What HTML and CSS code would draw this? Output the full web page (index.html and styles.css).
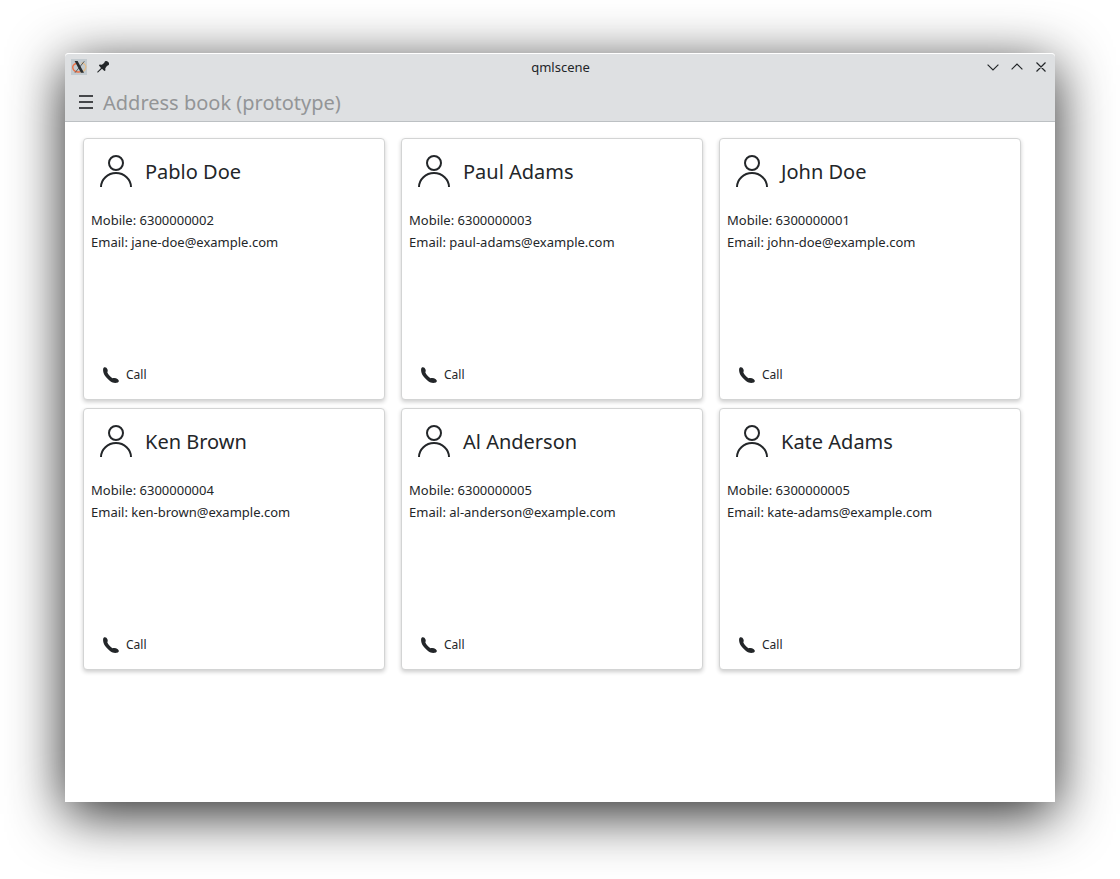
FILE: index.html
```html
<!DOCTYPE html>
<html lang="en">
<head>
<meta charset="utf-8">
<title>qmlscene</title>
<link rel="stylesheet" href="styles.css">
</head>
<body>
<svg class="defs" width="0" height="0">
  <symbol id="user" viewBox="0 0 32 34">
    <g fill="none" stroke="#232629" stroke-width="2"><circle cx="16" cy="9" r="7"/><path d="M1 33C1 25.5 7.7 19 16 19S31 25.5 31 33"/></g>
  </symbol>
  <symbol id="phone" viewBox="0 0 16 16">
    <path fill="#232629" d="M1.2 .3C2.7-.2 3.8 .7 4.4 2.2C4.9 3.5 4.8 4.4 4.3 5.2C5.2 7.4 7.2 9.8 9.5 11.3C10.9 10.6 13.2 10.9 14.8 12.2C16.2 13.4 16.2 14.6 14.9 15.4C12.6 16.3 9.6 16 7.3 14.2C3.6 11.5 .3 7.6 .1 3.6C0 2 .3 .8 1.2 .3Z"/>
  </symbol>
</svg>
<div class="window">
  <header class="header">
    <div class="titlebar">
      <div class="tools">
        <svg width="16" height="16" viewBox="0 0 16 16"><path fill="#c3cbd0" d="M0 0h16v16H0z"/><path fill="none" stroke="#ef7145" stroke-width="1.4" d="M5.8 4.2C2.5 5 1 7.3 2 9.8C3 12.3 6 13.4 9 12.8"/><path fill="none" stroke="#e5bd8b" stroke-width="1.3" d="M10.5 4C14 4.5 15.5 7 14.5 9.5C13.5 12 11.5 13 9 12.8"/><path stroke="#5c5f61" stroke-width="1" d="M13.3 2.3L4 13.7"/><path fill="#292d30" d="M3.6 2.1h3L13 13.8H9.9z"/></svg>
        <svg width="12" height="12" viewBox="0 0 12 12"><path fill="#232629" d="M8 .3Q9.8-.3 11.2 1T11.7 4L9.9 4.9L8.3 7.2L8.4 9.4L7.4 10L5 7.8L1 11.5H.3V10.8L4 6.9L1.9 4.6L2.6 3.6L4.9 3.7L7.1 2Z"/></svg>
      </div>
      <div class="caption">qmlscene</div>
      <svg class="buttons" width="60" height="12" viewBox="0 0 60 12" fill="none" stroke="#232629" stroke-width="1.15"><path d="M.6 3.6L6 9L11.4 3.6M24.6 8.4L30 3L35.4 8.4M49.5 1.5L58.5 10.5M58.5 1.5L49.5 10.5"/></svg>
    </div>
    <div class="toolbar">
      <svg width="14" height="14" viewBox="0 0 14 14"><path fill="#45474a" d="M0 0h14v2H0zM0 6h14v2H0zM0 12h14v2H0z"/></svg>
      <h1 class="heading">Address book (prototype)</h1>
    </div>
  </header>
  <main class="cards">
    <article class="card">
      <div class="person"><svg width="32" height="34"><use href="#user"/></svg><h2 class="name">Pablo Doe</h2></div>
      <p class="line">Mobile: 6300000002</p><p class="line">Email: jane-doe@example.com</p>
      <div class="call"><svg width="16" height="16"><use href="#phone"/></svg><span>Call</span></div>
    </article>
    <article class="card">
      <div class="person"><svg width="32" height="34"><use href="#user"/></svg><h2 class="name">Paul Adams</h2></div>
      <p class="line">Mobile: 6300000003</p><p class="line">Email: paul-adams@example.com</p>
      <div class="call"><svg width="16" height="16"><use href="#phone"/></svg><span>Call</span></div>
    </article>
    <article class="card">
      <div class="person"><svg width="32" height="34"><use href="#user"/></svg><h2 class="name">John Doe</h2></div>
      <p class="line">Mobile: 6300000001</p><p class="line">Email: john-doe@example.com</p>
      <div class="call"><svg width="16" height="16"><use href="#phone"/></svg><span>Call</span></div>
    </article>
    <article class="card">
      <div class="person"><svg width="32" height="34"><use href="#user"/></svg><h2 class="name">Ken Brown</h2></div>
      <p class="line">Mobile: 6300000004</p><p class="line">Email: ken-brown@example.com</p>
      <div class="call"><svg width="16" height="16"><use href="#phone"/></svg><span>Call</span></div>
    </article>
    <article class="card">
      <div class="person"><svg width="32" height="34"><use href="#user"/></svg><h2 class="name">Al Anderson</h2></div>
      <p class="line">Mobile: 6300000005</p><p class="line">Email: al-anderson@example.com</p>
      <div class="call"><svg width="16" height="16"><use href="#phone"/></svg><span>Call</span></div>
    </article>
    <article class="card">
      <div class="person"><svg width="32" height="34"><use href="#user"/></svg><h2 class="name">Kate Adams</h2></div>
      <p class="line">Mobile: 6300000005</p><p class="line">Email: kate-adams@example.com</p>
      <div class="call"><svg width="16" height="16"><use href="#phone"/></svg><span>Call</span></div>
    </article>
  </main>
</div>
</body>
</html>
```
FILE: styles.css
```css
* { box-sizing: border-box; }
body {
  margin: 0;
  height: 879px;
  padding: 53px 65px 77px;
  background: #fff;
  color: #232629;
  font: 13px/22px "Noto Sans", sans-serif;
  overflow: hidden;
}
svg { display: block; flex: none; }
.defs { position: absolute; }
h1, h2, p { margin: 0; font-weight: 400; }
.window {
  height: 749px;
  border-radius: 4px 4px 0 0;
  background: #fff;
  box-shadow: 0 12px 55px rgba(0, 0, 0, .86);
}
.header {
  height: 69px;
  border-top: 1px solid #fff;
  border-bottom: 1px solid #bcc0c3;
  border-radius: 4px 4px 0 0;
  background: #dee0e2;
}
.titlebar {
  display: grid;
  grid-template-columns: 1fr auto 1fr;
  align-items: center;
  height: 26px;
  padding: 0 8px;
}
.tools { display: flex; align-items: center; gap: 10px; margin-left: -2px; }
.caption { padding-left: 1px; line-height: 26px; }
.buttons { justify-self: end; }
.toolbar {
  display: flex;
  align-items: center;
  gap: 10px;
  height: 41px;
  padding: 3px 14px 0;
}
.heading { padding-top: 2px; font-size: 20px; line-height: 28px; color: #939597; }
.cards {
  display: grid;
  grid-template-columns: repeat(3, 302px);
  grid-auto-rows: 262px;
  gap: 8px 16px;
  padding: 16px 18px;
}
.card {
  display: flex;
  flex-direction: column;
  padding: 15px 7px 16px;
  border: 1px solid #d3d4d4;
  border-radius: 4px;
  background: #fff;
  box-shadow: 0 2px 4px rgba(0, 0, 0, .2);
}
.person {
  display: flex;
  align-items: center;
  gap: 13px;
  height: 34px;
  margin: 0 0 21px 9px;
}
.name { padding-top: 2px; font-size: 20px; line-height: 28px; }
.call {
  display: flex;
  align-items: center;
  gap: 7px;
  height: 16px;
  margin: auto 0 0 12px;
  font-size: 12px;
}
```
